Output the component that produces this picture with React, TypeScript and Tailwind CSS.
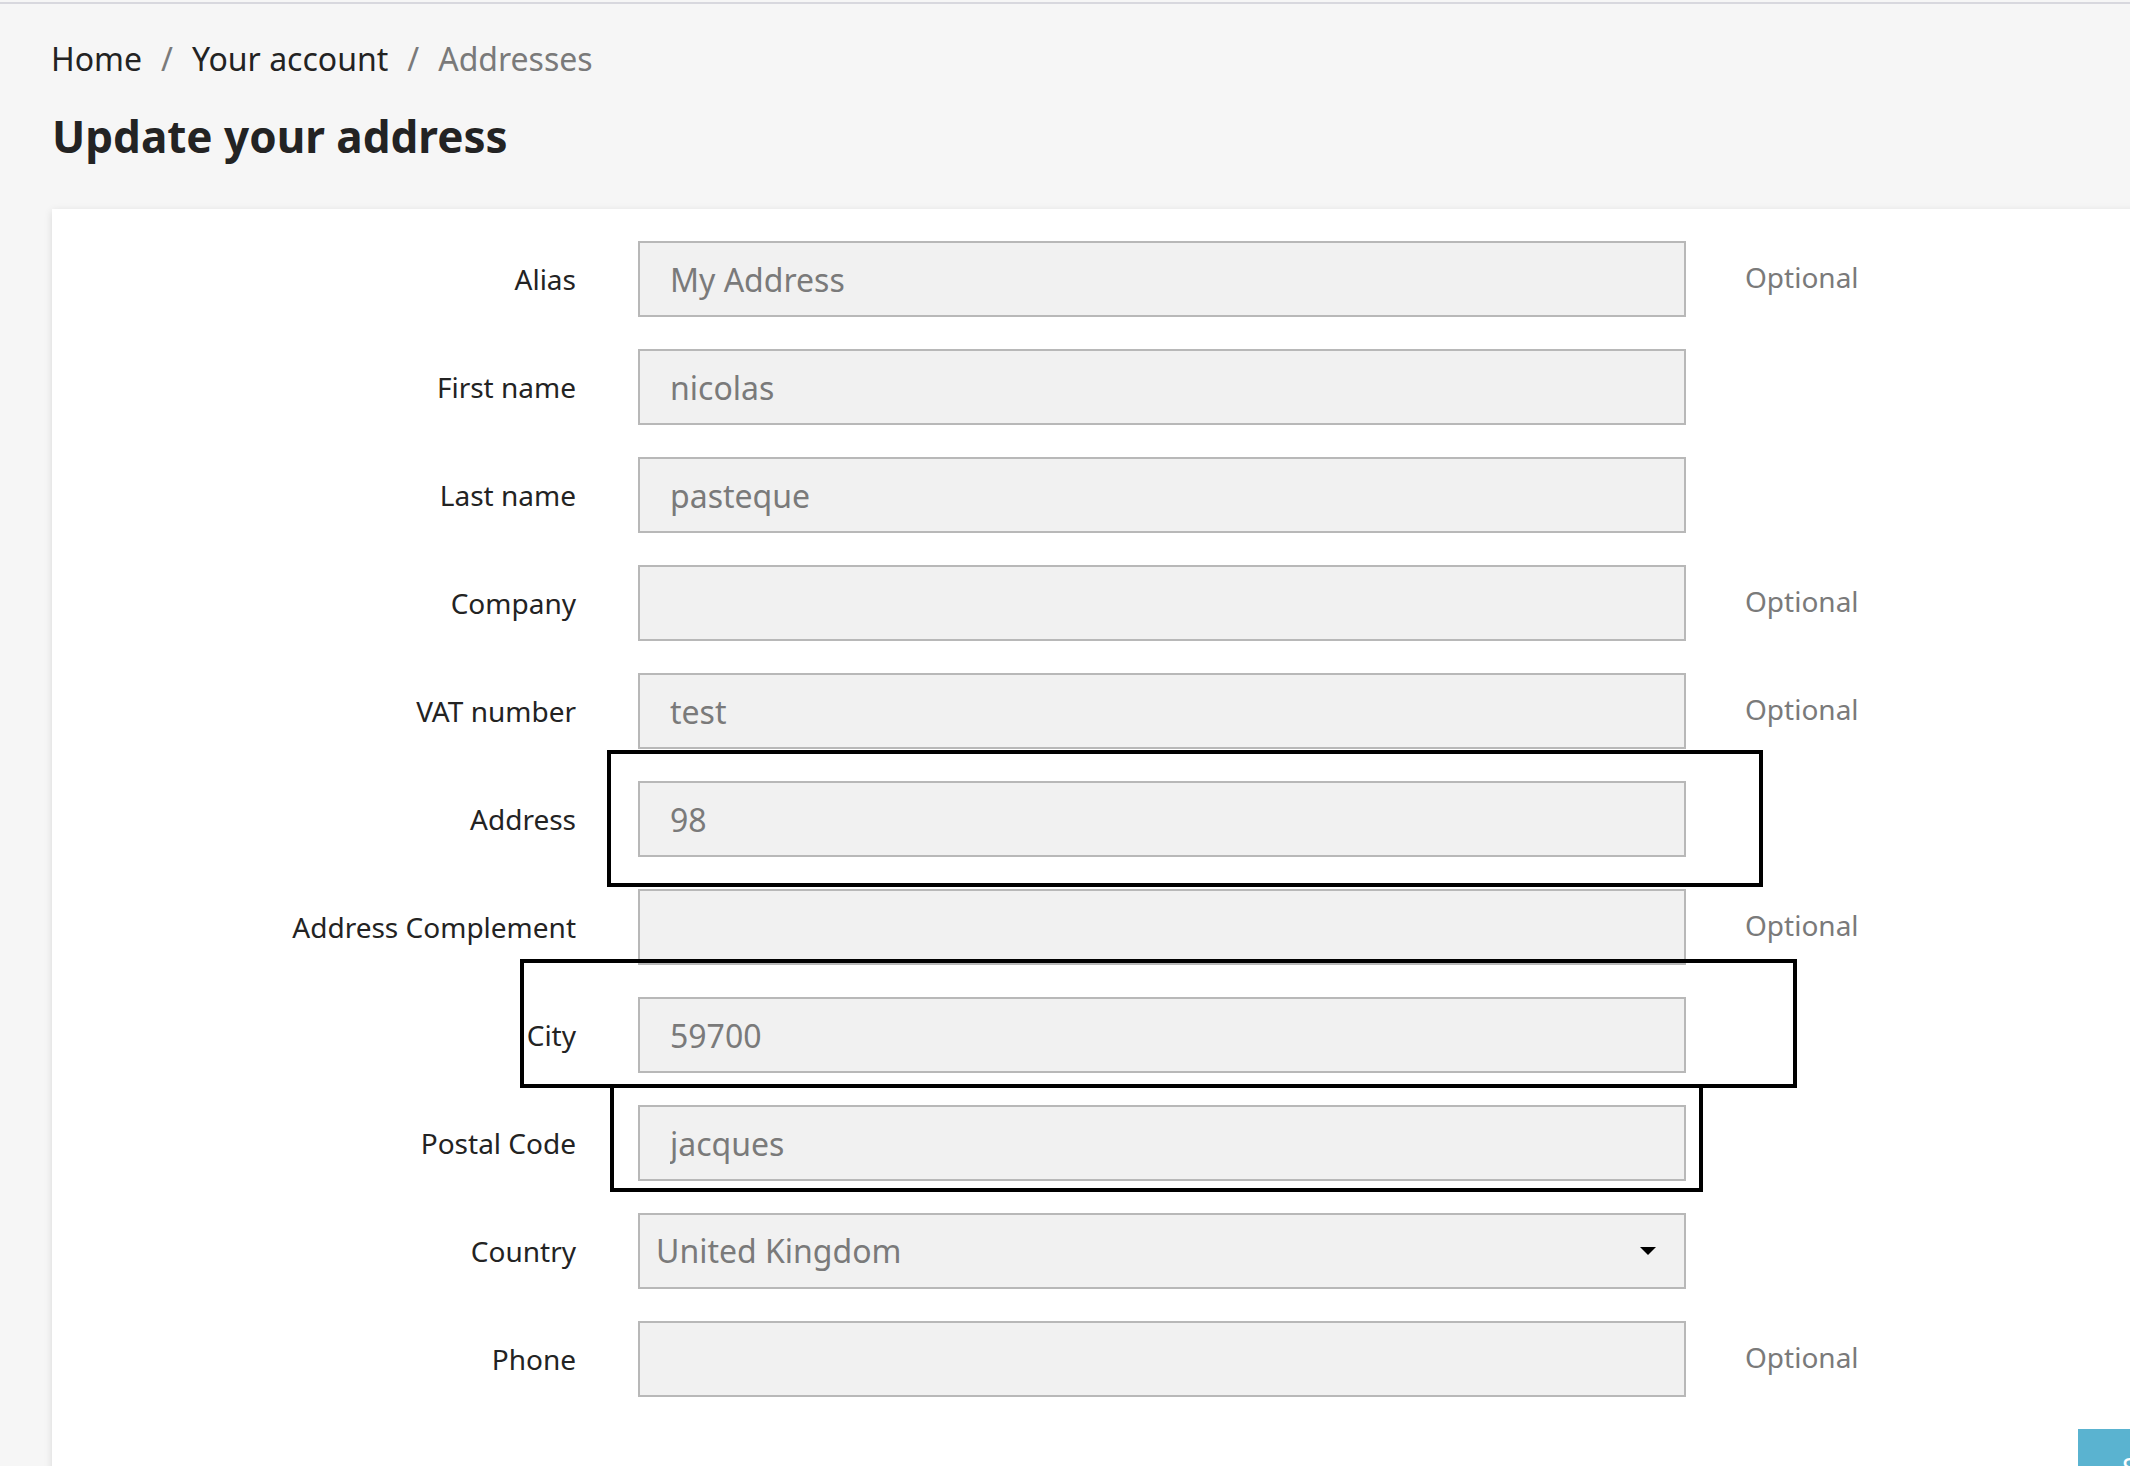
import React from "react";

type Field = { label: string; value: string; optional?: boolean; select?: boolean };

const fields: Field[] = [
  { label: "Alias", value: "My Address", optional: true },
  { label: "First name", value: "nicolas" },
  { label: "Last name", value: "pasteque" },
  { label: "Company", value: "", optional: true },
  { label: "VAT number", value: "test", optional: true },
  { label: "Address", value: "98" },
  { label: "Address Complement", value: "", optional: true },
  { label: "City", value: "59700" },
  { label: "Postal Code", value: "jacques" },
  { label: "Country", value: "United Kingdom", select: true },
  { label: "Phone", value: "", optional: true },
];

function Row({ f }: { f: Field }) {
  return (
    <div className="flex items-center h-[76px] mb-[32px]">
      <div className="w-[524px] text-right text-[28px] leading-[40px] text-[#232323]">{f.label}</div>
      {f.select ? (
        <div className="ml-[62px] w-[1048px] h-[76px] border-2 border-[#b8b8b8] bg-[#f1f1f1] flex items-center pl-[16px] pr-[28px] box-border">
          <span className="flex-1 text-[32px] text-[#7a7a7a]">{f.value}</span>
          <svg width="16" height="8" viewBox="0 0 16 8" className="block">
            <path d="M0 0 L16 0 L8 8 Z" fill="#000" />
          </svg>
        </div>
      ) : (
        <input
          readOnly
          value={f.value}
          className="ml-[62px] w-[1048px] h-[76px] border-2 border-[#b8b8b8] bg-[#f1f1f1] px-[30px] text-[32px] text-[#7a7a7a] outline-none box-border"
        />
      )}
      {f.optional && (
        <div className="ml-[59px] text-[28px] leading-[40px] text-[#7a7a7a] -mt-[4px]">Optional</div>
      )}
    </div>
  );
}

export default function App() {
  return (
    <div className="relative w-[2130px] h-[1466px] overflow-hidden bg-[#f6f6f6] font-['Noto_Sans',sans-serif]">
      <div className="mt-[2px] h-[2px] bg-[#d8d8de]" />
      <nav className="mt-[31px] pl-[51px] h-[48px] flex items-center text-[32px] leading-[48px]">
        <span className="text-[#232323]">Home</span>
        <span className="mx-[19px] text-[#7a7a7a]">/</span>
        <span className="text-[#232323]">Your account</span>
        <span className="mx-[19px] text-[#7a7a7a]">/</span>
        <span className="text-[#7a7a7a]">Addresses</span>
      </nav>
      <h1 className="mt-[23px] pl-[52px] text-[44px] leading-[60px] font-bold text-[#232323]">
        Update your address
      </h1>
      <div className="mt-[43px] ml-[52px] w-[2100px] bg-white pt-[32px] pb-[80px] shadow-[0_2px_8px_rgba(0,0,0,0.12)]">
        {fields.map((f) => (
          <Row key={f.label} f={f} />
        ))}
      </div>

      {/* annotation frames */}
      <div className="absolute left-[607px] top-[750px] w-[1156px] h-[137px] border-4 border-black" />
      <div className="absolute left-[520px] top-[959px] w-[1277px] h-[129px] border-4 border-black" />
      <div className="absolute left-[610px] top-[1084px] w-[1093px] h-[108px] border-4 border-black" />

      {/* save button peeking in */}
      <div className="absolute left-[2078px] top-[1429px] w-[220px] h-[80px] bg-[#5ab3d0] pl-[44px] pt-[24px]">
        <span className="block text-[28px] leading-[28px] text-white uppercase">Save</span>
      </div>
    </div>
  );
}
